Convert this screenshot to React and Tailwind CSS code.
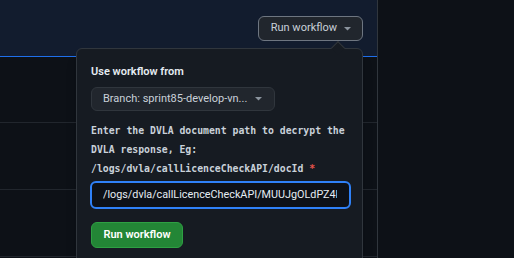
const Caret = ({ className = '' }) => (
    <svg width="7" height="4" viewBox="0 0 7 4" className={className}>
        <path d="M0 0h7L3.5 3.5z" fill="currentColor" />
    </svg>
);

const ui = "font-['Roboto','Liberation_Sans',sans-serif]";

export default function App() {
    return (
        <div className={`w-[514px] h-[258px] flex bg-[#0d1117] overflow-hidden ${ui}`}>
            {/* left column with header and runs list */}
            <div className="relative w-[378px] flex flex-col border-r border-[#30363d] shrink-0">
                <div className="h-[57px] bg-[#121c2e] border-b border-[#1f6feb] flex justify-end items-start pt-[16px] pr-[14px]">
                    <button className="h-[25px] pl-[12px] pr-[11px] flex items-center gap-[7px] rounded-[6px] border border-[#6e7681] bg-[#21262d] text-[#c9d1d9] text-[11px]">
                        Run workflow
                        <Caret className="text-[#8b949e]" />
                    </button>
                </div>
                <div className="h-[66px] border-b border-[#21262d]" />
                <div className="h-[67px] border-b border-[#21262d]" />
                <div className="h-[67px] border-b border-[#21262d]" />

                {/* dropdown */}
                <div className="absolute left-[76px] top-[48px] w-[287px] h-[230px] bg-[#161b22] border border-[#30363d] rounded-[6px] px-[14px] pt-[15px] shadow-lg">
                    <div className="absolute -top-[6px] left-[256px] w-[10px] h-[10px] rotate-45 bg-[#161b22] border-l border-t border-[#30363d]" />
                    <div className="text-[11px] leading-[16px] font-semibold text-[#e6edf3]">Use workflow from</div>
                    <button className="mt-[7px] h-[24px] w-[184px] pl-[11px] pr-[12px] flex items-center justify-between rounded-[6px] border border-[#30363d] bg-[#21262d] text-[#c9d1d9] text-[11px] whitespace-nowrap">
                        <span>Branch: sprint85-develop-vn...</span>
                        <Caret className="text-[#8b949e]" />
                    </button>
                    <div className="mt-[10px] font-['DejaVu_Sans_Mono',monospace] font-bold text-[9.8px] leading-[19px] text-[#c9d1d9]">
                        Enter the DVLA document path to decrypt the DVLA response, Eg: /logs/dvla/callLicenceCheckAPI/docId <span className="text-[#e5534b]">*</span>
                    </div>
                    <div className="mt-[3px] w-[261px] -ml-[1px] h-[28px] rounded-[6px] border-2 border-[#2f81f7] bg-[#0d1117] pl-[11px]">
                        <div className="w-[234px] overflow-hidden whitespace-nowrap text-[10.8px] leading-[24px] text-[#e6edf3]">/logs/dvla/callLicenceCheckAPI/MUUJgOLdPZ4PV</div>
                    </div>
                    <button className="mt-[13px] h-[26px] w-[92px] rounded-[6px] border border-[#2ea043] bg-[#238636] text-white text-[11px] font-semibold flex items-center justify-center">
                        Run workflow
                    </button>
                </div>
            </div>
            <div className="flex-1" />
        </div>
    );
}
